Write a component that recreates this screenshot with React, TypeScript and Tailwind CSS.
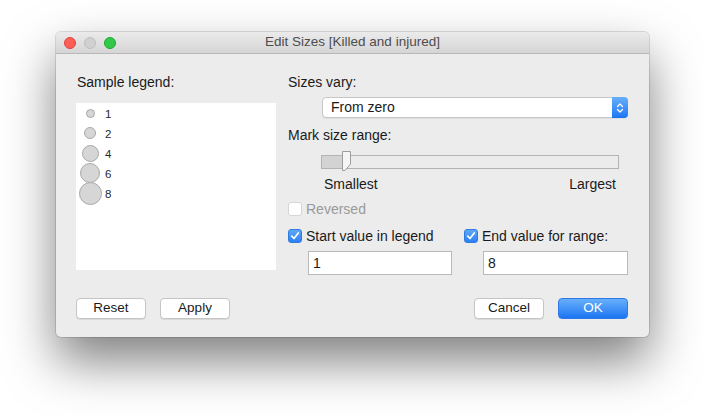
import React from "react";

const font = { fontFamily: '"Liberation Sans", Arial, sans-serif' };

function Check({ checked, disabled }: { checked?: boolean; disabled?: boolean }) {
  if (checked) {
    return (
      <div className="w-[14px] h-[14px] rounded-[3px] bg-gradient-to-b from-[#5ea8f9] to-[#2b80f5] border border-[#2f7be0] flex items-center justify-center">
        <svg width="10" height="10" viewBox="0 0 10 10">
          <path d="M1.8 5.2 L4 7.5 L8.3 2" stroke="white" strokeWidth="1.7" fill="none" strokeLinecap="round" strokeLinejoin="round" />
        </svg>
      </div>
    );
  }
  return (
    <div className={`w-[14px] h-[14px] rounded-[3px] bg-white border ${disabled ? "border-[#d6d6d6]" : "border-[#b0b0b0]"}`} />
  );
}

function Btn({ children, primary }: { children: React.ReactNode; primary?: boolean }) {
  return (
    <div
      className={
        primary
          ? "w-[70px] h-[21px] rounded-[4px] bg-gradient-to-b from-[#67affa] to-[#1a75f2] border border-[#2f78e8] text-white text-[13.5px] flex items-center justify-center"
          : "w-[70px] h-[21px] rounded-[4px] bg-white border border-[#c5c5c5] shadow-[0_1px_0_rgba(0,0,0,0.08)] text-[#1a1a1a] text-[13.5px] flex items-center justify-center"
      }
    >
      {children}
    </div>
  );
}

const legend = [
  { v: "1", d: 9 },
  { v: "2", d: 12 },
  { v: "4", d: 17 },
  { v: "6", d: 20 },
  { v: "8", d: 23 },
];

export default function App() {
  return (
    <div className="w-[704px] h-[417px] bg-white overflow-hidden pt-[32px] pl-[56px]" style={font}>
      <div className="w-[593px] h-[305px] bg-[#ececec] rounded-[5px] shadow-[0_24px_50px_rgba(0,0,0,0.5),0_0_0_1px_rgba(0,0,0,0.12)] flex flex-col overflow-hidden">
        {/* Title bar */}
        <div className="relative h-[22px] bg-gradient-to-b from-[#ebebeb] to-[#d5d5d5] border-b border-[#b8b8b8] flex items-center justify-center">
          <div className="absolute left-[8px] top-[5px] flex gap-[8px]">
            <div className="w-[12px] h-[12px] rounded-full bg-[#fc5f57] border border-[#e0443e]" />
            <div className="w-[12px] h-[12px] rounded-full bg-[#d0d0d0] border border-[#bdbdbd]" />
            <div className="w-[12px] h-[12px] rounded-full bg-[#34c84a] border border-[#1aab2c]" />
          </div>
          <span className="text-[13.5px] text-[#4d4d4d]">Edit Sizes [Killed and injured]</span>
        </div>

        {/* Body */}
        <div className="flex px-[20px] pt-[20px] text-[14px]">
          {/* Left */}
          <div className="w-[200px] flex flex-col">
            <div className="h-[16px] leading-[16px] text-[#1a1a1a] ml-[1px]">Sample legend:</div>
            <div className="mt-[13px] h-[167px] bg-white flex flex-col">
              {legend.map((l) => (
                <div key={l.v} className="h-[20px] flex items-center">
                  <div className="w-[28px] flex items-center justify-center">
                    <div
                      className="rounded-full bg-[#d6d6d6] border border-[#a9a9a9]"
                      style={{ width: l.d, height: l.d }}
                    />
                  </div>
                  <span className="ml-[1px] mt-[2px] leading-[14px] text-[11.5px] text-[#2a2a2a]">{l.v}</span>
                </div>
              ))}
            </div>
          </div>

          {/* Right */}
          <div className="ml-[12px] w-[340px] flex flex-col">
            <div className="h-[16px] leading-[16px] text-[#1a1a1a]">Sizes vary:</div>
            <div className="mt-[7px] ml-[34px] h-[21px] w-[306px] flex bg-white border border-[#c6c6c6] rounded-[4px] shadow-[0_1px_0_rgba(0,0,0,0.06)]">
              <div className="flex-1 flex items-center pl-[8px] text-[#1a1a1a]">From zero</div>
              <div className="w-[16px] -my-[1px] -mr-[1px] rounded-r-[4px] bg-gradient-to-b from-[#67affa] to-[#1a75f2] flex items-center justify-center">
                <svg width="8" height="12" viewBox="0 0 8 12">
                  <path d="M1.5 4.5 L4 2 L6.5 4.5 M1.5 7.5 L4 10 L6.5 7.5" stroke="white" strokeWidth="1.3" fill="none" strokeLinecap="round" strokeLinejoin="round" />
                </svg>
              </div>
            </div>
            <div className="mt-[9px] h-[16px] leading-[16px] text-[#1a1a1a]">Mark size range:</div>
            <div className="relative mt-[12px] ml-[33px] w-[298px] h-[14px] bg-[#ececec] border border-[#b3b3b3]">
              <div className="absolute left-0 top-0 bottom-0 w-[21px] bg-[#d3d3d3]" />
              <svg className="absolute left-[20px] -top-[5px]" width="10" height="20" viewBox="0 0 10 20">
                <path d="M0.5 0.5 H8.5 V13 L3 19.5 H0.5 Z" fill="#f5f5f5" stroke="#9d9d9d" strokeWidth="1" />
              </svg>
            </div>
            <div className="mt-[7px] ml-[36px] w-[292px] flex justify-between text-[#1a1a1a] h-[16px] leading-[16px]">
              <span>Smallest</span>
              <span>Largest</span>
            </div>
            <div className="mt-[9px] flex items-center h-[16px]">
              <Check disabled />
              <span className="ml-[4px] text-[#9a9a9a]">Reversed</span>
            </div>
            <div className="mt-[11px] flex items-center h-[16px]">
              <div className="w-[176px] flex items-center">
                <Check checked />
                <span className="ml-[4px] text-[#1a1a1a]">Start value in legend</span>
              </div>
              <Check checked />
              <span className="ml-[4px] text-[#1a1a1a]">End value for range:</span>
            </div>
            <div className="mt-[7px] flex">
              <div className="ml-[20px] w-[144px] h-[24px] bg-white border border-[#b9b9b9] flex items-center pl-[4px] text-[#1a1a1a]">1</div>
              <div className="ml-[31px] w-[145px] h-[24px] bg-white border border-[#b9b9b9] flex items-center pl-[4px] text-[#1a1a1a]">8</div>
            </div>
          </div>
        </div>

        {/* Footer */}
        <div className="mt-[23px] pl-[20px] pr-[21px] flex items-center">
          <Btn>Reset</Btn>
          <div className="ml-[14px]">
            <Btn>Apply</Btn>
          </div>
          <div className="flex-1" />
          <Btn>Cancel</Btn>
          <div className="ml-[14px]">
            <Btn primary>OK</Btn>
          </div>
        </div>
      </div>
    </div>
  );
}
